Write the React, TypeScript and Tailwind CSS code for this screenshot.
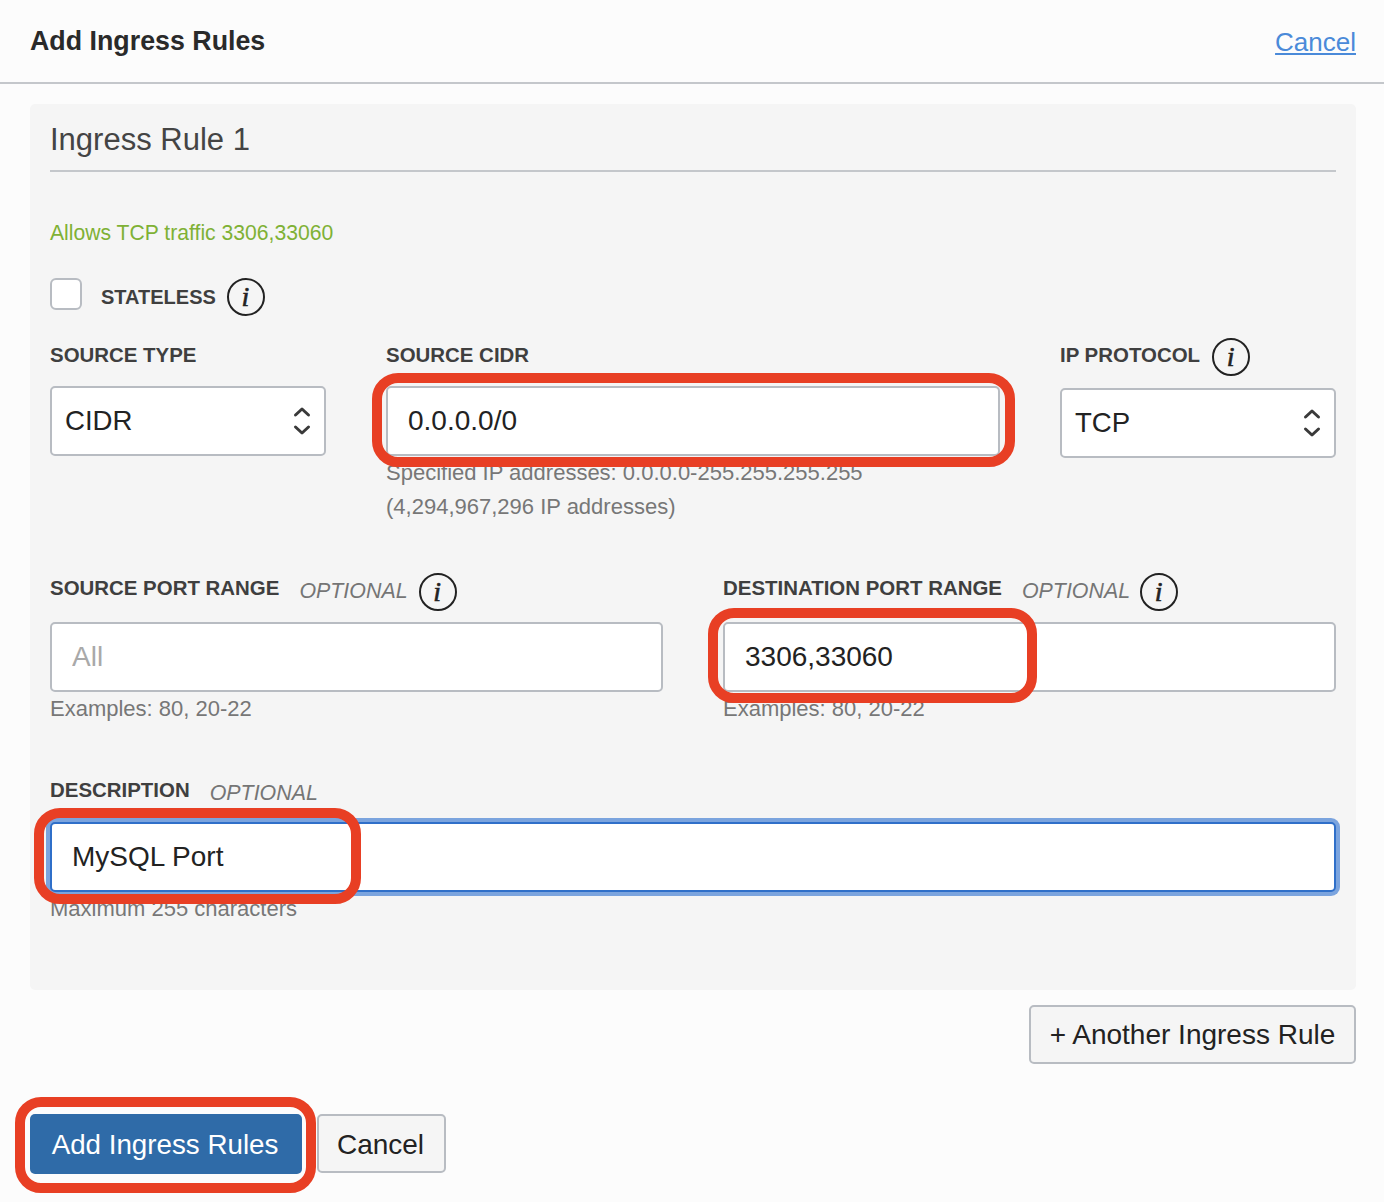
import React from "react";

const FONT = "font-['Liberation_Sans',Arial,sans-serif]";

function Info() {
  return (
    <span className="flex h-[38px] w-[38px] shrink-0 items-center justify-center rounded-full border-2 border-[#222] pr-[1px] font-['Liberation_Serif',serif] text-[28px] italic leading-none text-[#222] [-webkit-text-stroke:0.6px_#222]">
      i
    </span>
  );
}

function Chevrons() {
  return (
    <svg width="18" height="30" viewBox="0 0 18 30" fill="none" stroke="#3a3a3a" strokeWidth="3" strokeLinecap="round" strokeLinejoin="round" className="shrink-0 -translate-x-[1px]">
      <path d="M2.5 9 9 3 15.5 9" />
      <path d="M2.5 21 9 27 15.5 21" />
    </svg>
  );
}

function Label({ children }: { children: React.ReactNode }) {
  return <span className="whitespace-nowrap text-[20.45px] font-bold leading-[30px] text-[#3f3f3f]">{children}</span>;
}

function Optional() {
  return <span className="whitespace-nowrap text-[21.4px] italic leading-[36px] text-[#757575]">OPTIONAL</span>;
}

function Hint({ children }: { children: React.ReactNode }) {
  return <p className="text-[22px] leading-[34px] text-[#777]">{children}</p>;
}

function Select({ value }: { value: string }) {
  return (
    <div className="flex h-[70px] items-center justify-between rounded-[5px] border-2 border-[#b8bcc2] bg-white pl-[13px] pr-[12px] text-[27.6px] text-[#222]">
      <span>{value}</span>
      <Chevrons />
    </div>
  );
}

const inputClass =
  "block h-[70px] w-full rounded-[5px] border-2 border-[#b8bcc2] bg-white px-[20px] text-[28px] text-[#222] outline-none placeholder:text-[#a9a9a9]";

export default function App() {
  return (
    <div className={`${FONT} h-[1202px] w-[1384px] overflow-hidden bg-[#fcfcfc]`}>
      <header className="flex h-[84px] items-start justify-between border-b-2 border-[#c4c7cb] pl-[30px] pr-[28px]">
        <h1 className="pt-[22px] text-[26.8px] font-bold leading-[38px] text-[#2a2a2a]">Add Ingress Rules</h1>
        <a href="#" className="pt-[24px] text-[26px] leading-[36px] text-[#4a8ad9] underline">Cancel</a>
      </header>

      <section className="ml-[30px] mr-[28px] mt-[20px] h-[886px] rounded-[5px] bg-[#f5f5f5] p-[20px]">
        <h2 className="h-[48px] border-b-2 border-[#c4c7cb] text-[31px] leading-[32px] text-[#444]">Ingress Rule 1</h2>
        <p className="mt-[46px] text-[21.15px] leading-[30px] text-[#7fb135]">Allows TCP traffic 3306,33060</p>

        <div className="mt-[30px] flex h-[38px] items-center">
          <span className="h-[32px] w-[32px] -translate-y-[3px] rounded-[6px] border-2 border-[#b8bcc2] bg-white" />
          <span className="ml-[19px] mr-[11px] whitespace-nowrap text-[20px] font-bold leading-[30px] text-[#3f3f3f]">STATELESS</span>
          <Info />
        </div>

        <div className="mt-[22px] flex gap-[60px]">
          <div className="w-[276px] shrink-0">
            <div className="mb-[14px] h-[34px] pt-[2px]"><Label>SOURCE TYPE</Label></div>
            <Select value="CIDR" />
          </div>
          <div className="flex-1">
            <div className="mb-[14px] h-[34px] pt-[2px]"><Label>SOURCE CIDR</Label></div>
            <div className="relative">
              <input readOnly value="0.0.0.0/0" className={inputClass} />
              <span className="pointer-events-none absolute -bottom-[11px] -left-[14px] -right-[15px] -top-[13px] rounded-[26px] border-[10px] border-[#e83f24]" />
            </div>
            <Hint>Specified IP addresses: 0.0.0.0-255.255.255.255<br />(4,294,967,296 IP addresses)</Hint>
          </div>
          <div className="w-[276px] shrink-0">
            <div className="mb-[12px] flex h-[38px] items-start gap-[12px] pt-[2px]"><Label>IP PROTOCOL</Label><span className="-mt-[2px]"><Info /></span></div>
            <Select value="TCP" />
          </div>
        </div>

        <div className="mt-[49px] grid grid-cols-2 gap-[60px]">
          <div>
            <div className="mb-[11px] flex h-[38px] items-start">
              <Label>SOURCE PORT RANGE</Label>
              <span className="ml-[20px] mr-[11px]"><Optional /></span>
              <Info />
            </div>
            <input readOnly placeholder="All" className={inputClass} />
            <Hint>Examples: 80, 20-22</Hint>
          </div>
          <div>
            <div className="mb-[11px] flex h-[38px] items-start">
              <Label>DESTINATION PORT RANGE</Label>
              <span className="ml-[20px] mr-[10px]"><Optional /></span>
              <Info />
            </div>
            <div className="relative">
              <input readOnly value="3306,33060" className={inputClass} />
              <span className="pointer-events-none absolute -bottom-[11px] -left-[15px] -top-[14px] w-[329px] rounded-[26px] border-[10px] border-[#e83f24]" />
            </div>
            <Hint>Examples: 80, 20-22</Hint>
          </div>
        </div>

        <div className="mt-[49px]">
          <div className="mb-[13px] flex h-[34px] items-start">
            <Label>DESCRIPTION</Label>
            <span className="ml-[20px]"><Optional /></span>
          </div>
          <div className="relative">
            <input readOnly value="MySQL Port" className="block h-[70px] w-full rounded-[5px] border-2 border-[#2f6fc9] bg-white px-[20px] text-[28px] text-[#222] shadow-[0_0_0_4px_#7ba4de] outline-none" />
            <span className="pointer-events-none absolute -bottom-[12px] -left-[16px] -top-[14px] w-[327px] rounded-[26px] border-[10px] border-[#e83f24]" />
          </div>
          <Hint>Maximum 255 characters</Hint>
        </div>
      </section>

      <div className="ml-[30px] mr-[28px] mt-[15px] flex justify-end">
        <button className="h-[59px] w-[327px] rounded-[5px] border-2 border-[#b8bcc2] bg-[#f5f5f5] text-[28px] text-[#222]">+ Another Ingress Rule</button>
      </div>

      <div className="ml-[30px] mt-[50px] flex items-start gap-[15px]">
        <div className="relative">
          <button className="block h-[60px] w-[272px] rounded-[5px] bg-[#2f6ba8] pr-[2px] pt-[2px] text-[27.75px] text-white">Add Ingress Rules</button>
          <span className="pointer-events-none absolute -bottom-[19px] -left-[15px] -right-[14px] -top-[17px] rounded-[26px] border-[10px] border-[#e83f24]" />
        </div>
        <button className="h-[59px] w-[129px] rounded-[5px] border-2 border-[#b8bcc2] bg-[#f5f5f5] pr-[2px] pt-[2px] text-[28px] text-[#222]">Cancel</button>
      </div>
    </div>
  );
}
